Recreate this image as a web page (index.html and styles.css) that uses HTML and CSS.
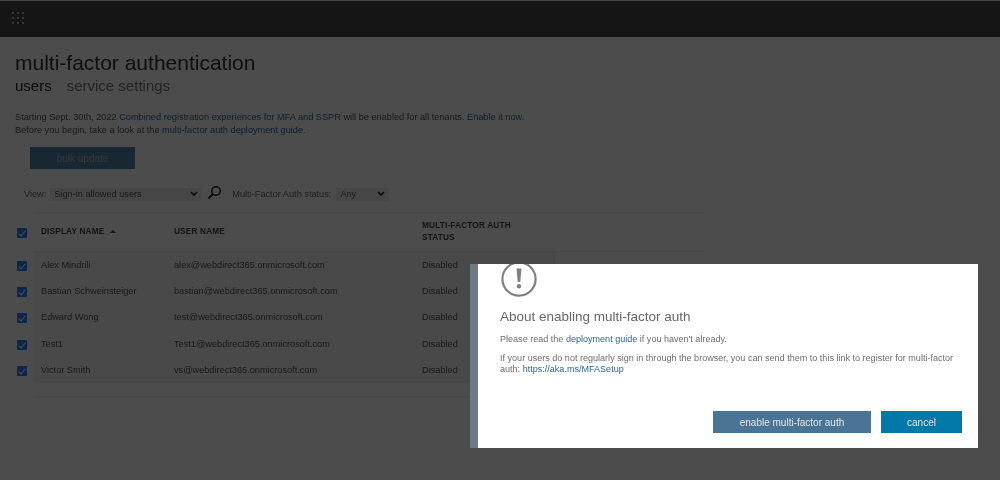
FILE: index.html
```html
<!DOCTYPE html>
<html lang="en">
<head>
<meta charset="utf-8">
<title>multi-factor authentication</title>
<link rel="stylesheet" href="styles.css">
</head>
<body>
<header class="topbar">
  <svg class="waffle" width="14" height="14" viewBox="0 0 14 14"><g fill="#fff"><rect x="1" y="1" width="2" height="2"/><rect x="6" y="1" width="2" height="2"/><rect x="11" y="1" width="2" height="2"/><rect x="1" y="6" width="2" height="2"/><rect x="6" y="6" width="2" height="2"/><rect x="11" y="6" width="2" height="2"/><rect x="1" y="11" width="2" height="2"/><rect x="6" y="11" width="2" height="2"/><rect x="11" y="11" width="2" height="2"/></g></svg>
</header>
<main class="page">
  <h1 class="title">multi-factor authentication</h1>
  <nav class="tabs"><span class="tab active">users</span><span class="tab">service settings</span></nav>
  <p class="notice">Starting Sept. 30th, 2022 <a>Combined registration experiences for MFA and SSPR</a> will be enabled for all tenants. <a>Enable it now.</a><br>Before you begin, take a look at the <a>multi-factor auth deployment guide.</a></p>
  <button class="bulk">bulk update</button>
  <div class="filters">
    <label class="flabel">View:</label>
    <div class="select view"><span>Sign-in allowed users</span><svg class="chev" width="8" height="6" viewBox="0 0 8 6"><path d="M1 1l3 3 3-3" fill="none" stroke="#222" stroke-width="1.6"/></svg></div>
    <svg class="search" width="16" height="16" viewBox="0 0 16 16"><circle cx="10" cy="6" r="4.300" fill="none" stroke="#222" stroke-width="1.500"/><path d="M7 9l-4.500 4.500" stroke="#222" stroke-width="2.200"/></svg>
    <label class="flabel status">Multi-Factor Auth status:</label>
    <div class="select any"><span>Any</span><svg class="chev" width="8" height="6" viewBox="0 0 8 6"><path d="M1 1l3 3 3-3" fill="none" stroke="#222" stroke-width="1.6"/></svg></div>
  </div>
  <section class="table">
    <div class="row head">
      <span class="check"></span>
      <span class="c-name">DISPLAY NAME <i class="sort"></i></span>
      <span class="c-user">USER NAME</span>
      <span class="c-status">MULTI-FACTOR AUTH<br>STATUS</span>
    </div>
    <div class="body">
      <div class="row"><span class="check"></span><span class="c-name">Alex Mindrili</span><span class="c-user">alex@webdirect365.onmicrosoft.com</span><span class="c-status">Disabled</span></div>
      <div class="row"><span class="check"></span><span class="c-name">Bastian Schweinsteiger</span><span class="c-user">bastian@webdirect365.onmicrosoft.com</span><span class="c-status">Disabled</span></div>
      <div class="row"><span class="check"></span><span class="c-name">Edward Wong</span><span class="c-user">test@webdirect365.onmicrosoft.com</span><span class="c-status">Disabled</span></div>
      <div class="row"><span class="check"></span><span class="c-name">Test1</span><span class="c-user">Test1@webdirect365.onmicrosoft.com</span><span class="c-status">Disabled</span></div>
      <div class="row"><span class="check"></span><span class="c-name">Victor Smith</span><span class="c-user">vs@webdirect365.onmicrosoft.com</span><span class="c-status">Disabled</span></div>
    </div>
  </section>
</main>
<div class="overlay"></div>
<div class="modal">
  <div class="modal-body">
    <svg class="warn" width="38" height="38" viewBox="0 0 38 38"><circle cx="19" cy="19" r="16.600" fill="none" stroke="#808080" stroke-width="2.200"/><path d="M16.500 8.500h5l-1.200 13.500h-2.600z" fill="#808080"/><circle cx="19" cy="26.300" r="2.200" fill="#808080"/></svg>
    <h2 class="modal-title">About enabling multi-factor auth</h2>
    <p class="para first">Please read the <a>deployment guide</a> if you haven't already.</p>
    <p class="para">If your users do not regularly sign in through the browser, you can send them to this link to register for multi-factor auth: <a>https://aka.ms/MFASetup</a></p>
    <div class="actions">
      <button class="btn enable">enable multi-factor auth</button>
      <button class="btn cancel">cancel</button>
    </div>
  </div>
</div>
</body>
</html>
```
FILE: styles.css
```css
* { box-sizing: border-box; }
html, body { margin: 0; height: 480px; overflow: hidden; }
body { background: #fff; font-family: "Liberation Sans", Arial, sans-serif; color: #333; font-size: 10px; }
.topbar { height: 37px; background: #474747; border-top: 1px solid #ddd; display: flex; align-items: center; padding: 0 0 2px 11px; }
.waffle { opacity: .6; filter: blur(.4px); }
.page { padding: 0 15px; filter: blur(.4px); }
.title { margin: 13px 0 0; font-size: 21px; line-height: 25px; font-weight: 400; color: #333; }
.tabs { display: flex; gap: 15px; margin-top: 2px; font-size: 15px; line-height: 18px; }
.tab { color: #777; }
.tab.active { color: #222; }
.notice { margin: 16px 0 0; font-size: 9.200px; line-height: 12.500px; color: #555; }
.notice a { color: #2a6a94; }
.para a { color: #2a6a94; }
.bulk { display: block; margin: 11px 0 0 15px; width: 105px; height: 22px; border: 0; background: #4f86ab; color: #bbb; font: 10px "Liberation Sans", Arial, sans-serif; }
.filters { display: flex; align-items: center; margin: 17px 0 0 9px; height: 16px; }
.flabel { color: #666; font-size: 9.200px; }
.select { display: flex; align-items: center; justify-content: space-between; height: 13px; background: #eee; color: #555; font-size: 9.200px; padding: 0 4px; }
.view { width: 152px; margin-left: 4px; }
.any { width: 53px; margin-left: 5px; }
.search { margin-left: 4px; margin-top: -3px; }
.status { margin-left: 10px; }
.table { width: 668px; margin-top: 10px; border-top: 1px solid #eee; margin-left: 20px; position: relative; }
.row { display: flex; align-items: center; height: 26.200px; font-size: 9.200px; color: #555; position: relative; }
.row.head { height: 39px; font-size: 8.200px; line-height: 12px; font-weight: 700; color: #444; border-bottom: 1px solid #eee; letter-spacing: .2px; }
.body { width: 520px; background: #f2f4f2; border-right: 1px solid #e4e4e4; margin-bottom: 13px; }
.table::after { content: ""; display: block; border-top: 1px solid #eee; }
.check { position: absolute; left: -18px; top: 50%; margin-top: -4px; width: 10px; height: 10px; background: #2a80ff; border-radius: 1px; }
.check::after { content: ""; position: absolute; left: 3px; top: 1px; width: 3px; height: 6px; border: solid #fff; border-width: 0 1.500px 1.500px 0; transform: rotate(40deg); }
.c-name { width: 133px; margin-left: 6px; }
.c-user { width: 248px; }
.c-status { width: 120px; }
.sort { display: inline-block; width: 0; height: 0; border: 3px solid transparent; border-top: 0; border-bottom: 3px solid #444; margin: 0 0 1px 3px; }
.overlay { position: fixed; inset: 0; background: rgba(0,0,0,.7); }
.modal { position: fixed; left: 470px; top: 264px; width: 508px; height: 184px; background: #fff; border-left: 8px solid #6e7b84; overflow: hidden; }
.modal-body { display: flex; flex-direction: column; padding: 0 22px 15px; height: 100%; filter: blur(.25px); }
.warn { display: block; flex: none; margin: -4px 0 0 0; }
.modal-title { margin: 10px 0 0; font-size: 13.500px; line-height: 18px; font-weight: 400; color: #666; }
.para { margin: 0; font-size: 9.050px; line-height: 11px; color: #6e6e6e; }
.para.first { margin-top: 8px; margin-bottom: 8px; }
.actions { margin: auto -6px 0 0; display: flex; justify-content: flex-end; gap: 10px; }
.btn { height: 22px; border: 0; color: #e5e5e5; font: 10px "Liberation Sans", Arial, sans-serif; }
.enable { width: 158px; background: #4a7496; }
.cancel { width: 81px; background: #0078a8; }
```
